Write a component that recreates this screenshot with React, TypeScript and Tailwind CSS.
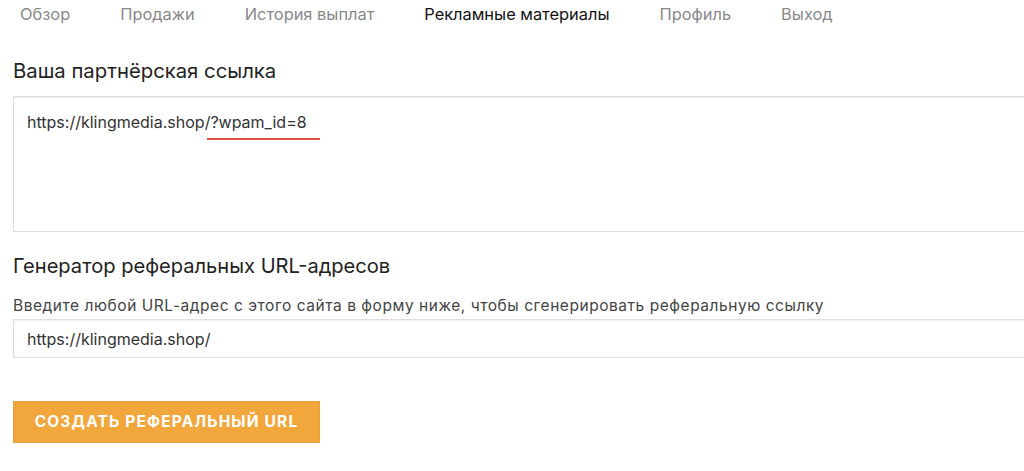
const tabs = ['Обзор', 'Продажи', 'История выплат', 'Рекламные материалы', 'Профиль', 'Выход']

export default function App() {
  return (
    <div className="min-h-screen overflow-hidden bg-white font-['Inter',sans-serif] text-[#333]">
      {/* Tabs */}
      <nav className="flex gap-[50px] pl-5 pt-[4px] text-[16.4px] leading-[20px]">
        {tabs.map((tab) => (
          <span key={tab} className={tab === 'Рекламные материалы' ? 'text-[#111]' : 'text-[#888]'}>
            {tab}
          </span>
        ))}
      </nav>

      <div className="w-[1040px] pl-[13px]">
        <h2 className="mt-[34px] text-[20.3px] leading-[26px] text-[#222]">Ваша партнёрская ссылка</h2>

        {/* Affiliate link box */}
        <div className="mt-[12px] h-[136px] border border-[#ddd] px-[13px] pt-[15px] text-[16px] leading-[20px] text-[#333] shadow-[inset_0_1px_2px_rgba(0,0,0,0.08)]">
          https://klingmedia.shop/
          <span className="relative">
            ?wpam_id=8
            <span className="absolute left-[-3px] top-[26px] h-[2px] w-[calc(100%+16px)] bg-[#e0533d]" />
          </span>
        </div>

        <h2 className="mt-[21px] text-[20.1px] leading-[26px] text-[#222]">Генератор реферальных URL-адресов</h2>
        <p className="mt-[17px] text-[15.5px] leading-[20px] tracking-[0.035em] text-[#444]">
          Введите любой URL-адрес с этого сайта в форму ниже, чтобы сгенерировать реферальную ссылку
        </p>

        <div className="mt-[3px] flex h-[39px] items-center border border-[#ddd] px-[13px] text-[16px] text-[#333] shadow-[inset_0_1px_2px_rgba(0,0,0,0.08)]">
          https://klingmedia.shop/
        </div>

        <button className="mt-[43px] h-[42px] w-[307px] border border-[#e9a03a] bg-[#f2a73d] text-[15.5px] font-bold uppercase tracking-[0.075em] text-white">
          Создать реферальный URL
        </button>
      </div>
    </div>
  )
}
